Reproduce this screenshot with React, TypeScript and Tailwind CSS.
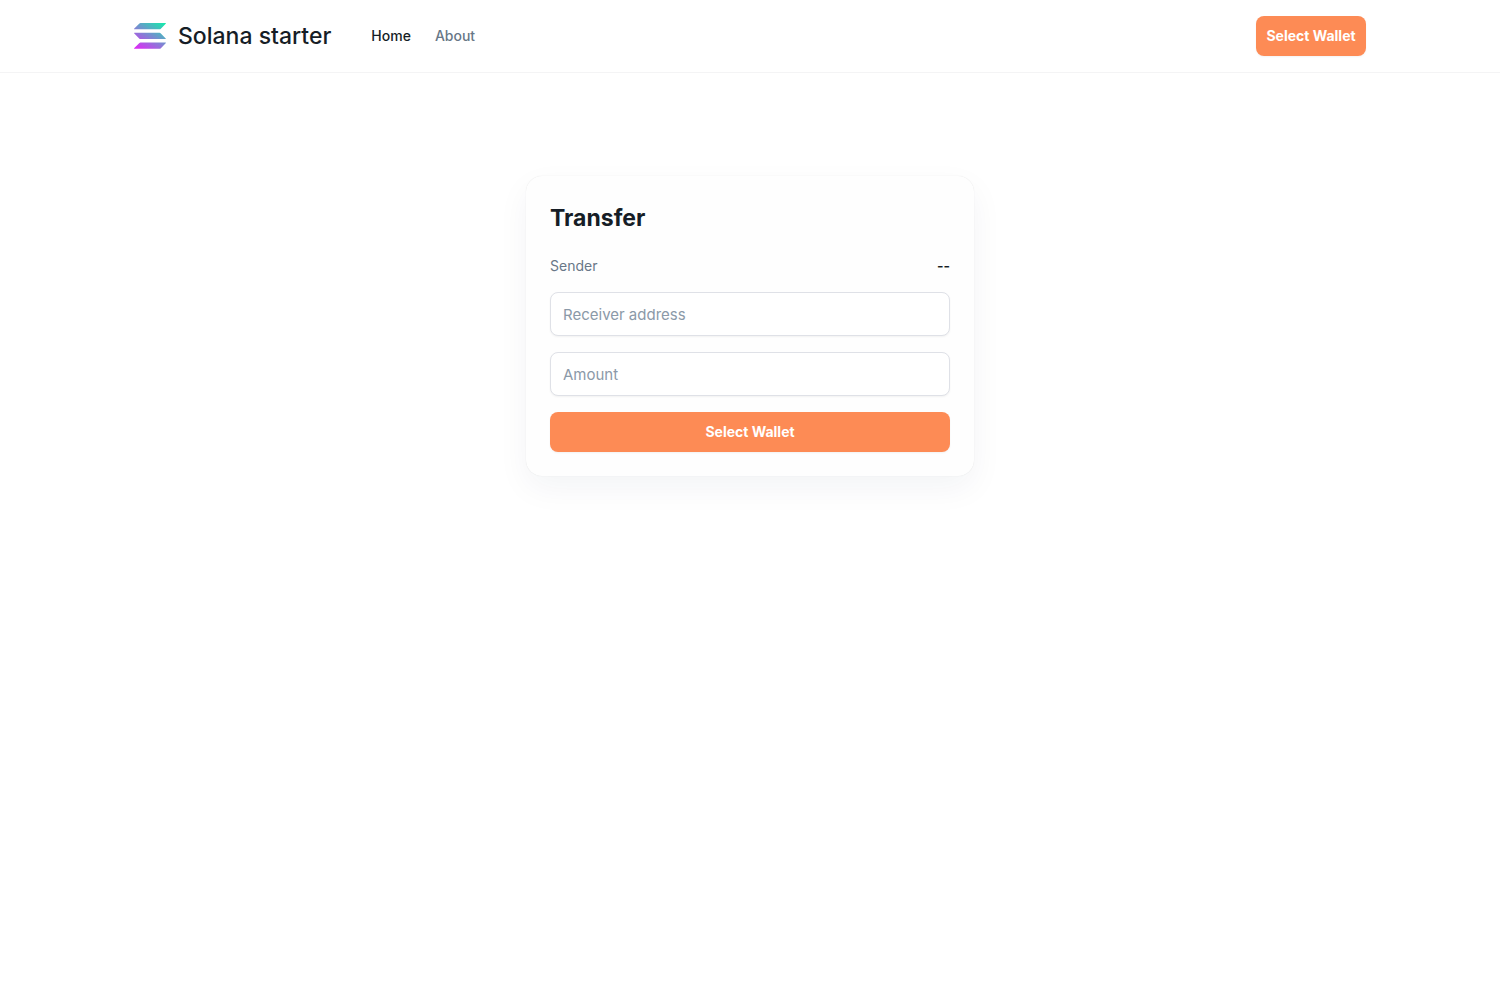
function Field({ label }: { label: string }) {
  return (
    <input
      type="text"
      aria-label={label}
      placeholder={label}
      className="h-11 w-full rounded-lg border border-[#dfe1e7] bg-white px-3 text-[15px] shadow-xs outline-none placeholder:text-[#8b99a8] focus:border-[#fe8b56]"
    />
  );
}

export default function App() {
  return (
    <div className="min-h-screen bg-white font-['Inter',sans-serif] text-[#161d26]">
      <header className="bg-white shadow-[0_1px_0_#f4f4f5]">
        <div className="mx-auto flex h-18 max-w-7xl items-center justify-between px-6">
          <div className="flex items-center gap-10">
            <a href="#" className="flex items-center gap-3">
              <svg width="32" height="26" viewBox="0 0 32 26" aria-hidden="true">
                <defs>
                  <linearGradient id="brand" gradientUnits="userSpaceOnUse" x1="27" y1="-1" x2="9" y2="29">
                    <stop offset="0" stopColor="#19e6ad" />
                    <stop offset="1" stopColor="#dc2cf5" />
                  </linearGradient>
                </defs>
                <path
                  fill="url(#brand)"
                  d="M5.400.4Q5.800 0 6.400 0H31.500Q32.300 0 31.700.7L26.600 5.900Q26.200 6.300 25.600 6.300H.5Q-.3 6.300.3 5.600ZM.5 9.800H25.600Q26.200 9.800 26.600 10.200L31.700 15.400Q32.300 16.100 31.500 16.100H6.400Q5.800 16.100 5.400 15.700L.3 10.500Q-.3 9.800.5 9.800ZM5.400 19.900Q5.800 19.500 6.400 19.500H31.500Q32.300 19.500 31.700 20.200L26.600 25.400Q26.200 25.800 25.600 25.800H.5Q-.3 25.800.3 25.100Z"
                />
              </svg>
              <span className="text-[23px] leading-9 font-medium">Solana starter</span>
            </a>
            <nav className="flex gap-6 text-sm font-medium">
              <a href="#">Home</a>
              <a href="#about" className="text-[#687787]">About</a>
            </nav>
          </div>
          <button type="button" className="h-10 w-27.5 rounded-lg bg-[#fd8b55] text-sm font-bold whitespace-nowrap text-white shadow-xs">
            Select Wallet
          </button>
        </div>
      </header>
      <main className="flex justify-center px-4 pt-26">
        <form className="flex w-full max-w-md flex-col gap-4 rounded-2xl bg-[#fefefe] p-6 shadow-[0_0_1px_rgba(0,0,0,0.12),0_12px_32px_rgba(24,39,75,0.05)]">
          <h1 className="mb-1 text-[23px] leading-9 font-bold">Transfer</h1>
          <div className="flex justify-between text-sm">
            <span className="text-[#687787]">Sender</span>
            <span className="font-semibold">--</span>
          </div>
          <Field label="Receiver address" />
          <Field label="Amount" />
          <button type="button" className="h-10 rounded-lg bg-[#fd8b55] text-sm font-bold text-white shadow-xs">
            Select Wallet
          </button>
        </form>
      </main>
    </div>
  );
}
